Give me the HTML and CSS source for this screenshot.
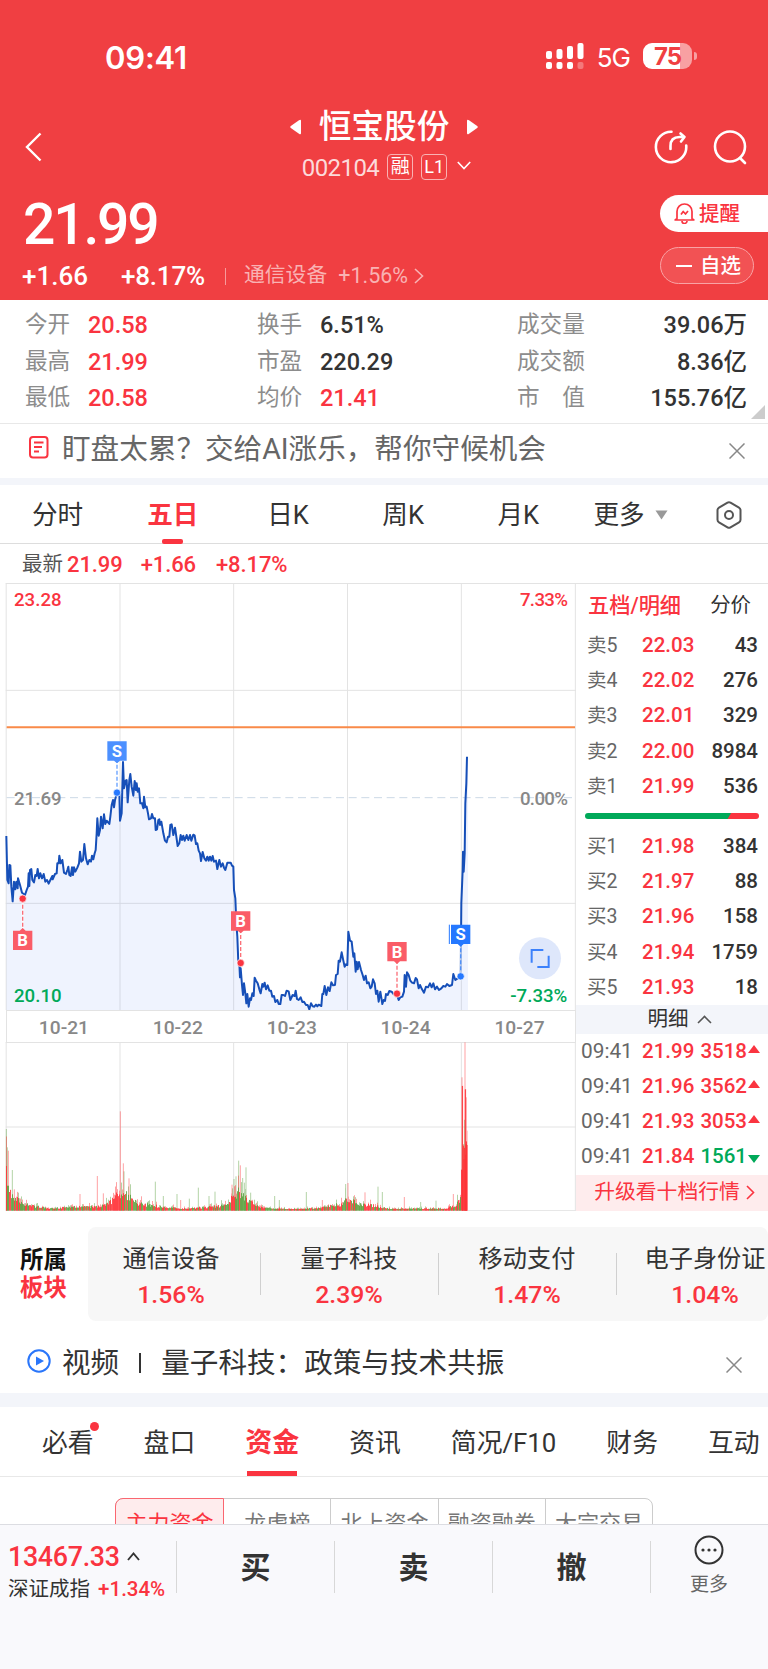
FILE: index.html
```html
<!DOCTYPE html>
<html lang="zh-CN">
<head>
    <meta charset="UTF-8">
    <meta name="viewport" content="width=device-width, initial-scale=1.0">
    <title>恒宝股份 002104</title>
    <link rel="stylesheet" href="styles.css">
</head>
<body>
    <header class="header">
        <div class="status-bar">
            <span class="time">09:41</span>
            <div class="status-icons">
                <svg width="38" height="26" viewBox="0 0 38 26" fill="#fff">
                    <rect x="0" y="8" width="6" height="8" rx="2"/>
                    <rect x="10.5" y="6" width="6" height="10" rx="2"/>
                    <rect x="21" y="3" width="6" height="13" rx="2"/>
                    <rect x="31.500" y="0" width="6" height="16" rx="2"/>
                    <rect x="0" y="19" width="6" height="7" rx="2"/>
                    <rect x="10.5" y="19" width="6" height="7" rx="2"/>
                    <rect x="21" y="19" width="6" height="7" rx="2"/>
                    <rect x="31.500" y="19" width="6" height="7" rx="2" opacity=".3"/>
                </svg>
                <span class="network">5G</span>
                <div class="battery"><span>75</span></div>
            </div>
        </div>

        <div class="nav">
            <svg class="back" width="17" height="30" viewBox="0 0 17 30" fill="none" stroke="#fff" stroke-width="2.4"><path d="M15.500 1.500 2 15 15.500 28.500"/></svg>
            <div class="title">
                <div class="title-name">
                    <svg width="11" height="16" viewBox="0 0 11 16" fill="#fff"><path d="M11 2v12q0 2-2 .7L.8 9Q-.3 8 .8 7L9 1.300Q11 0 11 2z"/></svg>
                    <h1>恒宝股份</h1>
                    <svg width="11" height="16" viewBox="0 0 11 16" fill="#fff"><path d="M0 2v12q0 2 2 .7L10.200 9q1.100-1 0-2L2 1.300Q0 0 0 2z"/></svg>
                </div>
                <div class="title-code">
                    <span>002104</span>
                    <i class="tag">融</i>
                    <i class="tag tag-level">L1</i>
                    <svg width="14" height="9" viewBox="0 0 14 9" fill="none" stroke="#fff" stroke-width="1.600"><path d="M.8 1 7 7.500 13.200 1"/></svg>
                </div>
            </div>
            <div class="nav-actions">
                <svg width="34" height="34" viewBox="0 0 34 34" fill="none" stroke="#fff" stroke-width="2.600" stroke-linecap="round" stroke-linejoin="round"><path d="M17.500 1.800A15.200 15.200 0 1 0 32.200 15.500"/><path d="M16.500 19v-3q0-9 9-9h4M26.500 3.500 30.500 7l-3.500 4.500"/></svg>
                <svg width="34" height="35" viewBox="0 0 34 35" fill="none" stroke="#fff" stroke-width="2.600" stroke-linecap="round"><circle cx="17" cy="16.500" r="15"/><path d="m27 28 5 5"/></svg>
            </div>
        </div>

        <div class="price-row">
            <div>
                <div class="price">21.99</div>
                <div class="change">
                    <span class="change-value">+1.66</span>
                    <span class="change-pct">+8.17%</span>
                    <i class="split"></i>
                    <span class="industry">通信设备</span>
                    <span class="industry-pct">+1.56%</span>
                    <svg width="10" height="16" viewBox="0 0 10 16" fill="none" stroke="#f9b2b3" stroke-width="1.600"><path d="m1 1 7.500 7L1 15"/></svg>
                </div>
            </div>
            <div class="price-actions">
                <div class="pill pill-alert">
                    <svg width="21" height="21" viewBox="0 0 21 21" fill="none" stroke="#fa3440" stroke-width="1.700" stroke-linejoin="round"><path d="M3 15.500V8.500a7.400 7.400 0 0 1 15 0v7l1.800 1.500H1.200zM8 18a2.500 2.500 0 0 0 5 0"/><path d="m7 11.500 2.200-3 2.300 2.500L14 8"/></svg>
                    <span>提醒</span>
                </div>
                <div class="pill pill-watch"><i></i><span>自选</span></div>
            </div>
        </div>
    </header>

    <section class="quotes">
        <dl>
            <div><dt>今开</dt><dd class="up">20.58</dd></div>
            <div><dt>最高</dt><dd class="up">21.99</dd></div>
            <div><dt>最低</dt><dd class="up">20.58</dd></div>
        </dl>
        <dl>
            <div><dt>换手</dt><dd>6.51%</dd></div>
            <div><dt>市盈</dt><dd>220.29</dd></div>
            <div><dt>均价</dt><dd class="up">21.41</dd></div>
        </dl>
        <dl class="totals">
            <div><dt>成交量</dt><dd>39.06万</dd></div>
            <div><dt>成交额</dt><dd>8.36亿</dd></div>
            <div><dt>市　值</dt><dd>155.76亿</dd></div>
        </dl>
        <i class="corner"></i>
    </section>

    <div class="notice">
        <svg width="20" height="23" viewBox="0 0 20 23" fill="none" stroke="#fa3440" stroke-width="2"><rect x="1" y="1" width="17.500" height="20.500" rx="3"/><path d="M5 6.500h9.500M5 11h8M5 15.500h5"/></svg>
        <p>盯盘太累？交给AI涨乐，帮你守候机会</p>
        <svg class="close" width="16" height="16" viewBox="0 0 16 16" fill="none" stroke="#888" stroke-width="1.500"><path d="m.5.5 15 15m0-15-15 15"/></svg>
    </div>

    <nav class="periods">
        <span>分时</span>
        <span class="active">五日</span>
        <span>日K</span>
        <span>周K</span>
        <span>月K</span>
        <span class="more">更多 <svg width="13" height="10" viewBox="0 0 13 10" fill="#999"><path d="M.5.500h12L6.500 9.500z"/></svg></span>
        <span class="settings"><svg width="26" height="28" viewBox="0 0 26 28" fill="none" stroke="#555" stroke-width="2"><path d="M11.500 1.600q1.500-.9 3 0l8.500 5q1.500.9 1.500 2.600v9.600q0 1.700-1.500 2.600l-8.500 5q-1.500.9-3 0l-8.500-5Q1.500 20.500 1.500 18.800V9.200q0-1.700 1.500-2.600z"/><circle cx="13" cy="14" r="4"/></svg></span>
    </nav>

    <div class="latest">
        <em>最新</em><b>21.99</b><b class="latest-change">+1.66</b><b class="latest-pct">+8.17%</b>
    </div>

    <main class="board">
        <div class="charts">
            <!-- price chart, 3 units per pixel -->
            <svg class="price-chart" width="576" height="427" viewBox="0 39 1728 1281">
                <path class="grid" d="M17 40.500H1728M17 361H1728M17 1000H1728M18.500 40V1320M360 40V1320M701 40V1320M1042.500 40V1320M1384 40V1320M1726 40V1320"/>
                <path class="mid-line" d="M20 683H1724"/>
                <path class="cost-line" d="M20 472H1725"/>
                <path id="priceArea" class="price-area"/>
                <path id="priceLine" class="price-line"/>
                <g id="marks"></g>
                <g class="axis">
                    <text class="t-up" x="42" y="108">23.28</text>
                    <text x="42" y="704">21.69</text>
                    <text class="t-down" x="42" y="1296">20.10</text>
                    <text class="t-up end" x="1702" y="108">7.33%</text>
                    <text class="end" x="1702" y="704">0.00%</text>
                    <text class="t-down end wide" x="1702" y="1296">-7.33%</text>
                </g>
                <circle cx="1620" cy="1165" r="63" fill="#dee7fb"/>
                <path d="M1595 1178v-38h35M1646 1157v34h-34" fill="none" stroke="#3c81fb" stroke-width="6"/>
            </svg>
            <div class="dates"><span>10-21</span><span>10-22</span><span>10-23</span><span>10-24</span><span>10-27</span></div>
            <svg class="volume-chart" width="576" height="169" viewBox="0 96 1728 507">
                <path class="grid" d="M17 97.500H1728M17 351H1728M17 602H1728M18.500 97V602M360 97V602M701 97V602M1042.500 97V602M1384 97V602M1726 97V602"/>
                <g id="volumeBars"></g>
            </svg>
        </div>

        <aside class="orders">
            <div class="orders-tabs"><b>五档/明细</b><span>分价</span></div>
            <ul>
                <li><em>卖5</em><b>22.03</b><span>43</span></li>
                <li><em>卖4</em><b>22.02</b><span>276</span></li>
                <li><em>卖3</em><b>22.01</b><span>329</span></li>
                <li><em>卖2</em><b>22.00</b><span>8984</span></li>
                <li><em>卖1</em><b>21.99</b><span>536</span></li>
            </ul>
            <div class="ratio"></div>
            <ul>
                <li><em>买1</em><b>21.98</b><span>384</span></li>
                <li><em>买2</em><b>21.97</b><span>88</span></li>
                <li><em>买3</em><b>21.96</b><span>158</span></li>
                <li><em>买4</em><b>21.94</b><span>1759</span></li>
                <li><em>买5</em><b>21.93</b><span>18</span></li>
            </ul>
            <div class="detail-title">明细 <svg width="15" height="9" viewBox="0 0 15 9" fill="none" stroke="#555" stroke-width="1.600"><path d="m1 8 6.500-6.500L14 8"/></svg></div>
            <ul class="trades">
                <li><em>09:41</em><b>21.99</b><span class="up">3518</span><i class="tri-up"></i></li>
                <li><em>09:41</em><b>21.96</b><span class="up">3562</span><i class="tri-up"></i></li>
                <li><em>09:41</em><b>21.93</b><span class="up">3053</span><i class="tri-up"></i></li>
                <li><em>09:41</em><b>21.84</b><span class="down">1561</span><i class="tri-down"></i></li>
            </ul>
            <div class="upgrade">升级看十档行情 <svg width="9" height="15" viewBox="0 0 9 15" fill="none" stroke="#fa3440" stroke-width="1.600"><path d="m1 1 6.500 6.500L1 14"/></svg></div>
        </aside>
    </main>

    <section class="sectors">
        <h2>所属<br><span class="up">板块</span></h2>
        <div class="sector-list">
            <div class="sector"><span>通信设备</span><b>1.56%</b></div>
            <div class="sector"><span>量子科技</span><b>2.39%</b></div>
            <div class="sector"><span>移动支付</span><b>1.47%</b></div>
            <div class="sector"><span>电子身份证</span><b>1.04%</b></div>
        </div>
    </section>

    <div class="notice video">
        <svg width="24" height="24" viewBox="0 0 24 24"><circle cx="12" cy="12" r="10.700" fill="none" stroke="#2a76fa" stroke-width="2"/><path d="M9 7.500v9l8-4.500z" fill="#2a76fa"/></svg>
        <p>视频<i></i>量子科技：政策与技术共振</p>
        <svg class="close" width="16" height="16" viewBox="0 0 16 16" fill="none" stroke="#888" stroke-width="1.500"><path d="m.5.5 15 15m0-15-15 15"/></svg>
    </div>

    <nav class="info-tabs">
        <span class="dot">必看</span>
        <span>盘口</span>
        <span class="active">资金</span>
        <span>资讯</span>
        <span>简况/F10</span>
        <span>财务</span>
        <span>互动</span>
    </nav>

    <div class="funds">
        <div class="segments">
            <span class="active">主力资金</span>
            <span>龙虎榜</span>
            <span>北上资金</span>
            <span>融资融券</span>
            <span>大宗交易</span>
        </div>
    </div>

    <footer class="trade-bar">
        <div class="index">
            <div class="index-value">13467.33 <svg width="13" height="9" viewBox="0 0 13 9" fill="none" stroke="#333" stroke-width="1.900"><path d="m1 8 5.500-6.500L12 8"/></svg></div>
            <div class="index-name">深证成指 <b>+1.34%</b></div>
        </div>
        <div class="trade">买</div>
        <div class="trade">卖</div>
        <div class="trade">撤</div>
        <div class="trade-more">
            <svg width="30" height="30" viewBox="0 0 30 30"><circle cx="15" cy="15" r="13.500" fill="none" stroke="#333" stroke-width="2"/><g fill="#333"><circle cx="9" cy="15" r="1.600"/><circle cx="15" cy="15" r="1.600"/><circle cx="21" cy="15" r="1.600"/></g></svg>
            更多
        </div>
    </footer>

    <script src="chart.js"></script>
</body>
</html>
```
FILE: styles.css
```css
* {
    box-sizing: border-box;
}
body {
    margin: 0;
    width: 768px;
    height: 1669px;
    overflow: hidden;
    display: flex;
    flex-direction: column;
    background: #fff;
    color: #333;
    font-family: Roboto, "Noto Sans CJK SC", sans-serif;
}
h1, h2, p, ul, dl, dd {
    margin: 0;
    padding: 0;
}
ul {
    list-style: none;
}
i, em {
    font-style: normal;
}
b {
    font-weight: 500;
}
svg {
    display: block;
    flex: none;
}
.up {
    color: #fa3440;
}
.down {
    color: #00a959;
}

/* header */
.header {
    flex: none;
    height: 300px;
    background: #f03f42;
    color: #fff;
}
.status-bar {
    height: 109px;
    padding: 0 71px 0 105px;
    display: flex;
    align-items: center;
    justify-content: space-between;
}
.time {
    padding-top: 6px;
    font: 600 31px/32px Inter, sans-serif;
    letter-spacing: -0.2px;
}
.status-icons {
    display: flex;
    align-items: center;
    padding-top: 3px;
}
.network {
    margin: 3px 13px 0 13px;
    font: 400 26px/26px Inter, sans-serif;
    letter-spacing: -1px;
}
.battery {
    position: relative;
    width: 49px;
    height: 26px;
    margin-right: 5px;
    border-radius: 9px;
    background: linear-gradient(90deg, #fff 37px, #f8a0a2 37px);
    color: #f03f42;
    font: 700 24px/27px Inter, sans-serif;
    letter-spacing: -1px;
    text-align: center;
}
.battery::after {
    content: "";
    position: absolute;
    right: -5px;
    top: 9px;
    width: 3px;
    height: 8px;
    border-radius: 0 3px 3px 0;
    background: #f8a0a2;
}
.nav {
    height: 76px;
    padding: 0 21px 0 25px;
    display: grid;
    grid-template-columns: 96px 1fr 96px;
    align-items: center;
}
.title {
    display: flex;
    flex-direction: column;
    align-items: center;
    margin: -5px 4px 0 0;
}
.title-name {
    display: flex;
    align-items: center;
    gap: 18px;
}
.title-name svg {
    margin-top: 1px;
}
.title-name h1 {
    font-size: 32.7px;
    line-height: 36px;
    font-weight: 500;
}
.title-code {
    display: flex;
    align-items: center;
    height: 28px;
    margin: 8px 0 0 5px;
    font-size: 24px;
    color: #fcdada;
}
.title-code span {
    letter-spacing: -0.6px;
    padding-top: 2px;
}
.title-code svg {
    margin-top: -2px;
}
.tag {
    width: 26px;
    height: 26px;
    margin-left: 8px;
    border: 1px solid #f9b2b3;
    border-radius: 4px;
    font-size: 19px;
    line-height: 23px;
    text-align: center;
    color: #fff;
}
.tag-level {
    font-size: 18px;
    margin-right: 10px;
}
.nav-actions {
    display: flex;
    justify-content: space-between;
    padding-left: 3px;
}
.price-row {
    display: flex;
    justify-content: space-between;
    height: 115px;
}
.price {
    padding: 13px 0 0 23px;
    font-size: 57px;
    line-height: 54px;
    font-weight: 500;
    letter-spacing: -2.2px;
}
.change {
    display: flex;
    align-items: center;
    height: 30px;
    margin-top: 9px;
    padding-left: 22px;
    font-size: 26px;
    font-weight: 500;
}
.change-value {
    width: 99px;
}
.change-pct {
    width: 104px;
    letter-spacing: -0.2px;
}
.split {
    width: 1px;
    height: 17px;
    margin-right: 18px;
    background: #f79a9b;
}
.industry, .industry-pct {
    font-size: 20.8px;
    line-height: 26px;
    font-weight: 400;
    color: #f9b2b3;
}
.industry {
    margin-top: -2px;
}
.industry-pct {
    width: 76px;
    margin-left: 11px;
    font-size: 21.5px;
}
.price-actions {
    width: 108px;
    padding-top: 10px;
}
.pill {
    display: flex;
    align-items: center;
    height: 37px;
    font-size: 20.5px;
    line-height: 30px;
    font-weight: 500;
    border-radius: 19px;
}
.pill-alert {
    padding-left: 14px;
    gap: 4px;
    background: #fff;
    color: #fa3440;
    border-radius: 19px 0 0 19px;
}
.pill-watch {
    width: 94px;
    margin-top: 15px;
    padding-left: 15px;
    border: 1px solid #f9a3a5;
    background: #f25254;
}
.pill-watch i {
    width: 16px;
    height: 2px;
    margin-right: 8px;
    background: #fff;
}

/* quote table */
.quotes {
    position: relative;
    flex: none;
    height: 124px;
    padding: 7px 21px 0 25px;
    display: grid;
    grid-template-columns: 232px 260px 1fr;
    border-bottom: 1px solid #e8e8e8;
    line-height: 37.5px;
}
.quotes dl > div {
    display: flex;
    height: 36.5px;
}
.quotes dt {
    width: 63px;
    font-size: 22.6px;
    line-height: 35px;
    color: #8c8c8c;
}
.quotes dd {
    font-size: 23.5px;
    font-weight: 500;
}
.totals > div {
    justify-content: space-between;
}
.totals dt {
    width: auto;
}
.corner {
    position: absolute;
    right: 3px;
    bottom: 4px;
    border-style: solid;
    border-width: 0 0 14px 14px;
    border-color: transparent transparent #ccc transparent;
}

/* notice rows */
.notice {
    flex: none;
    display: flex;
    align-items: center;
    height: 61px;
    padding: 0 23px 5px 29px;
    border-bottom: 7px solid #f3f5fa;
    font-size: 28.6px;
    line-height: 40px;
    color: #666;
}
.notice p {
    flex: 1;
    padding-left: 13px;
}
.notice > svg:first-child {
    margin-top: -3px;
}
.close {
    margin-top: 4px;
}

/* period tabs */
.periods {
    flex: none;
    display: grid;
    grid-template-columns: repeat(6, 115.2px) 1fr;
    height: 59px;
    border-bottom: 1px solid #ddd;
    font-size: 25.6px;
    line-height: 60px;
    text-align: center;
}
.periods .active {
    position: relative;
    font-weight: 700;
    color: #fa3440;
}
.periods .active::after {
    content: "";
    position: absolute;
    left: 47px;
    bottom: 1px;
    width: 21px;
    height: 5px;
    border-radius: 2px;
    background: #fa3440;
}
.more {
    display: flex;
    align-items: center;
    justify-content: center;
    gap: 10px;
    padding-right: 6px;
}
.settings {
    display: flex;
    align-items: center;
    padding-left: 25px;
}
.latest {
    flex: none;
    height: 39px;
    padding-left: 22px;
    display: flex;
    align-items: center;
    font-size: 22px;
    line-height: 40px;
    color: #fa3440;
}
.latest em {
    width: 45px;
    font-size: 20.5px;
    color: #555;
}
.latest b {
    padding-top: 2px;
    letter-spacing: -0.1px;
}
.latest-change {
    margin-left: 18px;
}
.latest-pct {
    margin-left: 20px;
}

/* charts */
.board {
    flex: none;
    display: flex;
    height: 628px;
}
.charts {
    width: 576px;
}
.grid {
    fill: none;
    stroke: #e3e3e3;
    stroke-width: 3;
}
.mid-line {
    stroke: #ccd9e6;
    stroke-width: 3;
    stroke-dasharray: 24 14;
}
.cost-line {
    stroke: #f98a48;
    stroke-width: 6;
}
.price-area {
    fill: #4d7df3;
    fill-opacity: 0.09;
}
.price-line {
    fill: none;
    stroke: #164fb8;
    stroke-width: 6;
    stroke-linejoin: round;
}
.axis text {
    font-size: 56px;
    font-weight: 500;
    fill: #888;
}
.axis .t-up {
    fill: #fa3440;
}
.axis .t-down {
    fill: #00a959;
}
.axis .end {
    text-anchor: end;
    letter-spacing: -2px;
}
.axis .wide {
    letter-spacing: 0;
}
.mark-text {
    font-size: 50px;
    font-weight: 700;
    fill: #fff;
    text-anchor: middle;
}
.dates {
    display: grid;
    grid-template-columns: repeat(5, 113.9px);
    height: 32px;
    margin: 0 0 0 6px;
    border-left: 1px solid #e3e3e3;
    border-right: 1px solid #e3e3e3;
    border-top: 1px solid #e3e3e3;
    font-size: 19.2px;
    font-weight: 500;
    line-height: 33px;
    text-align: center;
    color: #888;
}

/* order book */
.orders {
    width: 192px;
    border-top: 1px solid #e3e3e3;
}
.orders-tabs {
    display: flex;
    justify-content: space-between;
    height: 44px;
    padding: 0 17px 0 12px;
    font-size: 20.4px;
    line-height: 43px;
}
.orders-tabs b {
    color: #fa3440;
    font-size: 21.2px;
    font-weight: 500;
}
.orders li {
    display: flex;
    height: 35.2px;
    padding: 0 10px 0 11px;
    font-size: 20.5px;
    line-height: 35.2px;
}
.orders li em {
    width: 55px;
    color: #666;
    font-size: 19.5px;
}
.orders li b {
    color: #fa3440;
}
.orders li span {
    flex: 1;
    text-align: right;
    font-weight: 500;
}
.ratio {
    height: 6px;
    margin: 9px 9px 10px 9px;
    border-radius: 3px;
    background: linear-gradient(120deg, #00a959 126px, #fa3440 127px);
}
.detail-title {
    display: flex;
    align-items: center;
    justify-content: center;
    gap: 8px;
    height: 29px;
    padding-left: 15px;
    background: #f3f5fa;
    font-size: 20.5px;
    line-height: 28px;
}
.orders .trades li {
    align-items: center;
    padding: 0 8px 0 5px;
}
.orders .trades em {
    width: 61px;
    font-size: 20.8px;
}
.tri-up, .tri-down {
    margin: -5px 0 0 1px;
    border: 6.5px solid transparent;
    border-bottom: 8px solid #fa3440;
    border-top: 0;
}
.tri-down {
    margin-top: 3px;
    border-top: 8px solid #00a959;
    border-bottom: 0;
}
.upgrade {
    display: flex;
    align-items: center;
    justify-content: center;
    gap: 6px;
    height: 36px;
    padding-left: 5px;
    padding-bottom: 1px;
    background: #feeced;
    color: #fa3440;
    font-size: 20.8px;
    line-height: 30px;
}

/* sectors */
.sectors {
    flex: none;
    display: flex;
    height: 110px;
    padding-top: 16px;
}
.sectors h2 {
    width: 88px;
    padding: 20px 0 0 20px;
    font-size: 23.4px;
    line-height: 27.5px;
    font-weight: 700;
    color: #111;
}
.sector-list {
    display: flex;
    width: 680px;
    overflow: hidden;
    border-radius: 8px;
    background: #f7f7f7;
}
.sector {
    position: relative;
    flex: none;
    display: flex;
    flex-direction: column;
    align-items: center;
    width: 178px;
    padding-top: 14px;
    font-size: 24.2px;
    line-height: 36px;
}
.sector:first-child {
    margin-left: -6px;
}
.sector b {
    font-size: 24.8px;
    color: #fa3440;
}
.sector + .sector::before {
    content: "";
    position: absolute;
    left: 0;
    top: 26px;
    height: 42px;
    border-left: 1px solid #d0d0d0;
}
.video {
    height: 86px;
    padding: 11px 26px 0 27px;
    border-bottom-width: 14px;
    color: #333;
}
.video p {
    padding-left: 11px;
}
.video i {
    display: inline-block;
    width: 2px;
    height: 20px;
    margin: 0 20px;
    background: #333;
}

/* info tabs */
.info-tabs {
    flex: none;
    display: flex;
    gap: 50px;
    height: 70px;
    padding-left: 42px;
    border-bottom: 1px solid #e8e8e8;
    font-size: 25.8px;
    line-height: 72px;
    white-space: nowrap;
}
.info-tabs span {
    position: relative;
}
.info-tabs .active {
    font-size: 27px;
    font-weight: 700;
    color: #fa3440;
}
.info-tabs .active::after {
    content: "";
    position: absolute;
    left: 2px;
    right: 2px;
    bottom: 0;
    height: 5px;
    background: #fa3440;
}
.dot::after {
    content: "";
    position: absolute;
    right: -5px;
    top: 15px;
    width: 9px;
    height: 9px;
    border-radius: 50%;
    background: #fa3440;
}
.funds {
    flex: none;
    height: 47px;
    padding: 21px 0 0 115px;
    overflow: hidden;
}
.segments {
    display: grid;
    grid-template-columns: repeat(5, 1fr);
    width: 538px;
    height: 54px;
    border: 1px solid #ccc;
    border-radius: 8px;
    font-size: 22px;
    line-height: 50px;
    text-align: center;
    color: #777;
}
.segments span + span {
    border-left: 1px solid #ccc;
}
.segments .active {
    margin: -1px -1px 0 -1px;
    border: 1px solid #fa6670;
    border-radius: 8px 0 0 8px;
    background: #feeced;
    color: #fa3440;
    z-index: 1;
}

/* bottom bar */
.trade-bar {
    flex: 1;
    display: flex;
    padding-top: 16px;
    border-top: 1px solid #dcdde2;
    background: #f9f9fc;
}
.index {
    width: 176px;
    padding-left: 8px;
}
.index-value {
    display: flex;
    align-items: center;
    gap: 7px;
    height: 32px;
    font-size: 26.8px;
    font-weight: 500;
    letter-spacing: -0.3px;
    color: #fa3440;
}
.index-value svg {
    margin-top: -2px;
}
.index-name {
    font-size: 20.5px;
    line-height: 32px;
}
.index-name b {
    margin-left: 3px;
    color: #fa3440;
}
.trade, .trade-more {
    width: 158px;
    height: 52px;
    border-left: 1px solid #d8d8d8;
    font-size: 30px;
    line-height: 54px;
    font-weight: 700;
    text-align: center;
}
.trade-more {
    display: flex;
    flex-direction: column;
    align-items: center;
    width: 117px;
    font-size: 19px;
    line-height: 32px;
    font-weight: 400;
    color: #666;
}
.trade-more svg {
    margin: -6px 0 4px;
}
```
FILE: chart.js
```js
// Chart coordinates use 3 units per screen pixel
const SVG_NS = 'http://www.w3.org/2000/svg';

const points = `19,798 22,930 26,940 28,885 31,886 34,950 38,994 42,935 46,958 49,935 53,955 54,925 60,945 66,968 75,975 80,960
84,950 86,910 88,948 90,900 94,897 97,930 102,937 106,915 110,918 113,897 117,925 121,910 126,925 131,912 136,935 141,930
146,941 151,930 157,918 158,928 165,912 170,910 172,880 176,880 178,857 182,880 187,870 192,908 198,912 202,900 205,890
208,915 212,918 216,892 219,915 222,892 226,905 232,893 237,880 240,845 244,875 249,870 253,822 258,865 263,883 268,870
273,875 276,857 280,868 284,850 287,840 290,790 292,745 296,797 300,780 303,740 308,775 312,733 316,762 320,752 328,762
331,740 335,705 339,690 342,712 345,690 350,672 358,670 360,752 365,730 369,576 372,655 377,632 380,630 383,697 388,630
391,612 395,650 400,677 404,633 408,660 410,640 413,665 417,655 421,700 426,700 430,715 432,680 436,712 440,710 444,730
447,748 453,745 456,732 460,745 465,745 467,780 471,778 475,750 478,748 480,765 484,755 490,790 495,812 500,817 504,800
508,800 511,765 515,763 520,795 525,773 529,800 533,828 538,820 542,795 546,810 550,797 554,812 560,795 565,810 570,795
574,812 580,794 584,797 588,822 592,820 596,842 600,850 603,873 608,846 613,865 618,872 622,860 626,872 630,860 634,872
638,858 642,875 648,872 652,897 658,870 663,890 668,880 672,893 676,900 682,878 692,878 696,887 700,890 702,960 706,985
709,1060 712,1100 715,1178 718,1180 720,1222 722,1195 726,1245 729,1275 732,1240 736,1270 739,1300 742,1272 746,1310
750,1285 753,1290 757,1270 761,1278 764,1223 768,1232 773,1240 778,1258 782,1270 787,1242 790,1250 794,1238 798,1258
803,1246 808,1262 813,1262 817,1280 822,1278 826,1296 832,1290 836,1302 841,1302 845,1275 850,1275 855,1278 860,1262
866,1264 871,1290 878,1275 884,1278 887,1262 891,1287 896,1290 902,1282 907,1296 912,1295 918,1305 923,1305 928,1318
933,1300 938,1309 943,1310 948,1304 952,1309 956,1304 964,1308 967,1272 970,1272 974,1248 979,1275 984,1252 989,1263
994,1237 999,1246 1005,1245 1008,1215 1013,1212 1016,1172 1020,1175 1025,1147 1030,1172 1034,1190 1038,1183 1042,1185
1045,1085 1050,1112 1055,1115 1060,1160 1063,1150 1067,1205 1070,1175 1073,1198 1077,1176 1083,1200 1088,1215 1092,1230
1097,1217 1101,1240 1106,1237 1111,1255 1115,1250 1119,1228 1124,1240 1128,1272 1132,1262 1136,1295 1141,1265 1147,1302
1151,1290 1155,1293 1158,1272 1163,1275 1168,1263 1175,1265 1180,1272 1190,1272 1196,1290 1201,1282 1207,1280 1212,1265
1214,1215 1218,1250 1221,1207 1226,1215 1231,1232 1236,1238 1242,1240 1247,1224 1251,1228 1256,1255 1260,1245 1266,1258
1272,1268 1278,1250 1284,1252 1290,1240 1295,1252 1300,1240 1305,1258 1311,1250 1317,1260 1324,1255 1330,1248 1336,1250
1341,1242 1348,1248 1356,1245 1360,1212 1366,1230 1373,1225 1382,1219 1384,1000 1388,900 1389,845 1391,905 1394,850
1396,700 1399,640 1401,560`.replace(/\n/g, ' ');

document.getElementById('priceLine').setAttribute('d', 'M' + points);
document.getElementById('priceArea').setAttribute('d', 'M' + points + ' 1404,600 1404,1320 19,1320z');

function add(parent, tag, attrs, text) {
    const el = document.createElementNS(SVG_NS, tag);
    for (const key in attrs) el.setAttribute(key, attrs[key]);
    if (text) el.textContent = text;
    parent.appendChild(el);
    return el;
}

// Buy / sell marks: dot position and the centre of the label box
const marks = [
    { type: 'B', x: 68, dot: 986, box: 1111 },
    { type: 'S', x: 351, dot: 668, box: 543 },
    { type: 'B', x: 722, dot: 1179, box: 1053 },
    { type: 'B', x: 1191, dot: 1271, box: 1145 },
    { type: 'S', x: 1382, dot: 1219, box: 1093, solid: true }
];
const marksGroup = document.getElementById('marks');
marks.forEach(m => {
    const color = m.type === 'B' ? '#fa3440' : '#2578ff';
    const box = m.solid ? '#2578ff' : (m.type === 'B' ? '#fa5c67' : '#4c90ff');
    const dir = m.dot > m.box ? 1 : -1;
    add(marksGroup, 'path', { d: `M${m.x} ${m.dot}V${m.box}`, stroke: '#fff', 'stroke-width': 7, opacity: .7 });
    add(marksGroup, 'path', { d: `M${m.x} ${m.dot}V${m.box}`, stroke: color, 'stroke-width': 4, 'stroke-dasharray': '12 6', opacity: .7 });
    add(marksGroup, 'circle', { cx: m.x, cy: m.dot, r: 11, fill: color, stroke: '#fff', 'stroke-width': 2 });
    if (m.solid) add(marksGroup, 'path', { d: `M${m.x - 34} ${m.box - 29}v58`, stroke: box, 'stroke-width': 3 });
    add(marksGroup, 'path', {
        d: `M${m.x - 29} ${m.box - 29}h58v58h-58zM${m.x - 9} ${m.box + dir * 29}l9 ${dir * 8} 9 ${-dir * 8}z`,
        fill: box
    });
    add(marksGroup, 'text', { x: m.x, y: m.box + 18, class: 'mark-text' }, m.type);
});

// Volume: base level by position, plus single spikes [x, height, colour]
const levels = [
    [19, 160], [25, 100], [38, 65], [60, 38], [90, 22], [150, 9], [230, 18], [280, 16], [320, 26], [345, 55], [360, 80],
    [385, 62], [410, 32], [450, 24], [500, 14], [560, 8], [640, 18], [680, 22], [700, 70], [720, 85], [745, 42], [770, 20],
    [820, 8], [900, 7], [960, 13], [1030, 30], [1044, 58], [1075, 28], [1120, 22], [1170, 8], [1240, 9], [1340, 9],
    [1370, 28], [1382, 50], [1386, 230], [1402, 240]
];
const spikes = [
    [19, 245, 0], [22, 190, 0], [25, 180, 1], [37, 122, 0], [43, 64, 1], [240, 50, 1], [292, 104, 1], [310, 52, 1],
    [361, 298, 1], [370, 142, 1], [372, 118, 0], [387, 97, 1], [466, 87, 0], [490, 44, 0], [531, 50, 0], [542, 32, 1],
    [568, 36, 0], [595, 69, 0], [627, 44, 0], [645, 57, 0], [696, 78, 1], [702, 95, 0], [708, 103, 0], [716, 150, 0],
    [721, 136, 1], [728, 98, 0], [733, 84, 0], [738, 130, 0], [752, 54, 0], [824, 44, 0], [838, 32, 0], [919, 56, 0],
    [967, 32, 1], [1037, 80, 0], [1044, 83, 1], [1095, 55, 1], [1134, 72, 0], [1147, 56, 0], [1213, 41, 1], [1262, 26, 0],
    [1308, 30, 0], [1360, 50, 1], [1386, 400, 1], [1388, 375, 1], [1390, 200, 0], [1395, 505, 1], [1397, 365, 1],
    [1399, 340, 1], [1401, 240, 1]
];

let seed = 7;
function random() {
    seed = (seed * 16807) % 2147483647;
    return seed / 2147483647;
}

function levelAt(x) {
    for (let i = 1; i < levels.length; i++) {
        const [x0, h0] = levels[i - 1];
        const [x1, h1] = levels[i];
        if (x <= x1) return h0 + (h1 - h0) * (x - x0) / (x1 - x0);
    }
    return 0;
}

function redShareAt(x) {
    if (x > 1384 || (x > 270 && x < 362)) return .85;
    if (x < 75) return .35;
    return x > 700 && x < 745 ? .12 : .52;
}

const bars = ['', ''];
const shades = ['', ''];
for (let x = 19.5; x < 1402; x += 3) {
    const color = random() < redShareAt(x) ? 1 : 0;
    const h = Math.max(5, levelAt(x) * (.45 + random() * .45));
    bars[color] += `M${x} 602v-${h.toFixed(1)}`;
    const shade = random() < .7 ? color : 1 - color;
    if (random() < .6) shades[shade] += `M${x} 602v-${(h * (1.15 + random() * .7)).toFixed(1)}`;
}
spikes.forEach(([x, h, color]) => shades[color] += `M${x} 602v-${h}`);

const volume = document.getElementById('volumeBars');
const colors = ['#5aa03c', '#ff3237'];
[0, 1].forEach(c => add(volume, 'path', { d: shades[c], stroke: colors[c], 'stroke-width': 3, opacity: .45 }));
[0, 1].forEach(c => add(volume, 'path', { d: bars[c], stroke: colors[c], 'stroke-width': 3, opacity: .85 }));
// the last session is dense enough to read as solid red
add(volume, 'path', { d: 'M1387 602v-374M1396 602v-364M1399 602v-200M1401 602v-197M1392 602v-155', stroke: colors[1], 'stroke-width': 3 });
```
